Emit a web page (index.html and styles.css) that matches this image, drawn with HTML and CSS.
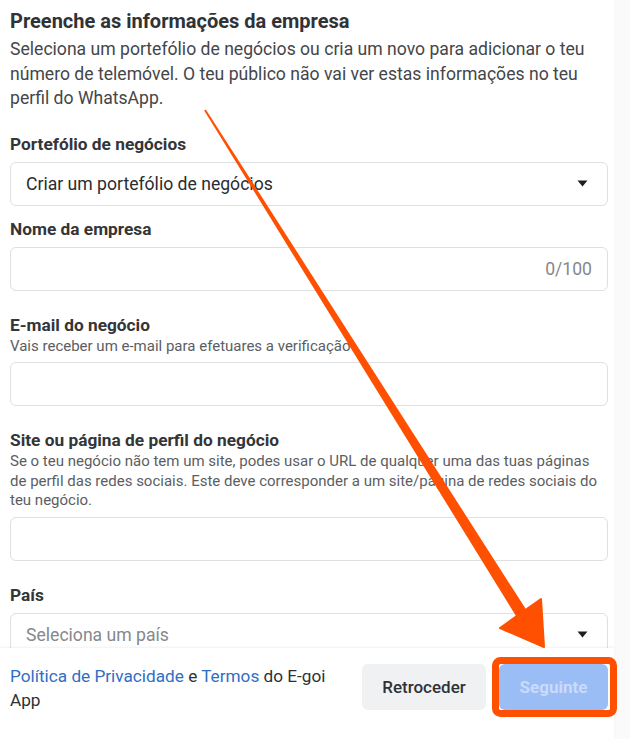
FILE: index.html
```html
<!DOCTYPE html>
<html lang="pt">
  <head>
    <meta charset="utf-8">
    <title>Preenche as informações da empresa</title>
    <link rel="stylesheet" href="styles.css">
  </head>
<body>

<div class="janela">
  <div class="conteudo">
    <h2 class="titulo">Preenche as informações da empresa</h2>
    <p class="descricao">Seleciona um portefólio de negócios ou cria um novo para adicionar o teu número de telemóvel. O teu público não vai ver estas informações no teu perfil do WhatsApp.</p>

    <div class="campo">
      <div class="rotulo">Portefólio de negócios</div>
      <div class="caixa seletor">
        <span>Criar um portefólio de negócios</span>
        <svg class="seta" width="11" height="7" viewBox="0 0 11 7"><path d="M0.5 0.5h10L5.5 6.5z" fill="#1c1e21"/></svg>
      </div>
    </div>

    <div class="campo">
      <div class="rotulo">Nome da empresa</div>
      <div class="caixa contador"><span>0/100</span></div>
    </div>

    <div class="campo largo">
      <div class="rotulo">E-mail do negócio</div>
      <div class="ajuda">Vais receber um e-mail para efetuares a verificação</div>
      <div class="caixa"></div>
    </div>

    <div class="campo largo">
      <div class="rotulo">Site ou página de perfil do negócio</div>
      <div class="ajuda">Se o teu negócio não tem um site, podes usar o URL de qualquer uma das tuas páginas de perfil das redes sociais. Este deve corresponder a um site/página de redes sociais do teu negócio.</div>
      <div class="caixa"></div>
    </div>

    <div class="campo largo">
      <div class="rotulo">País</div>
      <div class="caixa seletor vazio">
        <span>Seleciona um país</span>
        <svg class="seta" width="11" height="7" viewBox="0 0 11 7"><path d="M0.5 0.5h10L5.5 6.5z" fill="#1c1e21"/></svg>
      </div>
    </div>
  </div>

  <div class="rodape">
    <p class="legal"><a href="#">Política de Privacidade</a> e <a href="#">Termos</a> do E-goi App</p>
    <div class="botoes">
      <button class="botao voltar">Retroceder</button>
      <button class="botao seguinte">Seguinte</button>
    </div>
  </div>
</div>

<svg class="anotacao" width="630" height="739" viewBox="0 0 630 739">
  <polygon points="204.2,110.5 205.8,109.5 526.6,610.3 516.4,616.7" fill="#fe5000"/>
  <polygon points="500,628 541,599 544,647" fill="#fe5000" stroke="#fe5000" stroke-width="2" stroke-linejoin="round"/>
  <rect x="495.5" y="660.5" width="118" height="53" rx="5" fill="none" stroke="#fe5000" stroke-width="7"/>
</svg>

</body>
</html>
```

FILE: styles.css
```css
    body {
        margin: 0;
        background: #fafafa;
        font-family: Roboto, "Liberation Sans", sans-serif;
        color: #1c1e21;
    }
    .janela {
        width: 614px;
        height: 739px;
        background: #fff;
        display: flex;
        flex-direction: column;
    }
    .conteudo {
        flex: 1;
        overflow: hidden;
        padding: 9px 6px 0 10px;
    }
    .titulo {
        font-size: 20px;
        line-height: 24px;
        font-weight: bold;
        margin: 0;
        color: #303236;
    }
    .descricao {
        font-size: 17.6px;
        line-height: 24.5px;
        margin: 4px 0 0 0;
        color: #444649;
    }
    .campo {
        margin-top: 23px;
    }
    .campo + .campo {
        margin-top: 13px;
    }
    .campo.largo {
        margin-top: 24px;
    }
    .rotulo {
        font-size: 17.3px;
        line-height: 20px;
        font-weight: bold;
        color: #333538;
    }
    .ajuda {
        font-size: 15px;
        line-height: 19.5px;
        color: #5b5e63;
        margin-top: 2px;
    }
    .campo .ajuda + .caixa {
        margin-top: 6px;
    }
    .caixa {
        height: 42px;
        border: 1px solid #dddfe2;
        border-radius: 6px;
        margin-top: 8px;
        display: flex;
        align-items: center;
        padding: 0 15px;
        font-size: 17.6px;
        color: #2a2c30;
    }
    .seletor {
        justify-content: space-between;
    }
    .seletor .seta {
        margin-right: 4px;
    }
    .vazio {
        color: #85888d;
    }
    .contador {
        justify-content: flex-end;
        color: #85888d;
    }
    .rodape {
        height: 91px;
        flex: none;
        display: flex;
        align-items: flex-start;
        justify-content: space-between;
        padding: 0 6px 0 10px;
        background: #fff;
        box-shadow: 0 -1px 2px rgba(0, 0, 0, 0.06);
        position: relative;
    }
    .legal {
        width: 340px;
        margin: 16px 0 0 0;
        font-size: 17.2px;
        line-height: 24px;
        color: #2f3134;
    }
    .legal a {
        color: #2f6ec4;
        text-decoration: none;
    }
    .botoes {
        display: flex;
        gap: 13px;
        margin-top: 16px;
    }
    .botao {
        height: 46px;
        border: none;
        border-radius: 6px;
        font-family: Roboto, "Liberation Sans", sans-serif;
        font-size: 17px;
    }
    .voltar {
        width: 124px;
        background: #f0f1f3;
        color: #303236;
        font-weight: 500;
    }
    .seguinte {
        width: 109px;
        background: #9bbdf6;
        color: #c9dbfb;
        font-weight: bold;
    }
    .anotacao {
        position: absolute;
        left: 0;
        top: 0;
    }
```
